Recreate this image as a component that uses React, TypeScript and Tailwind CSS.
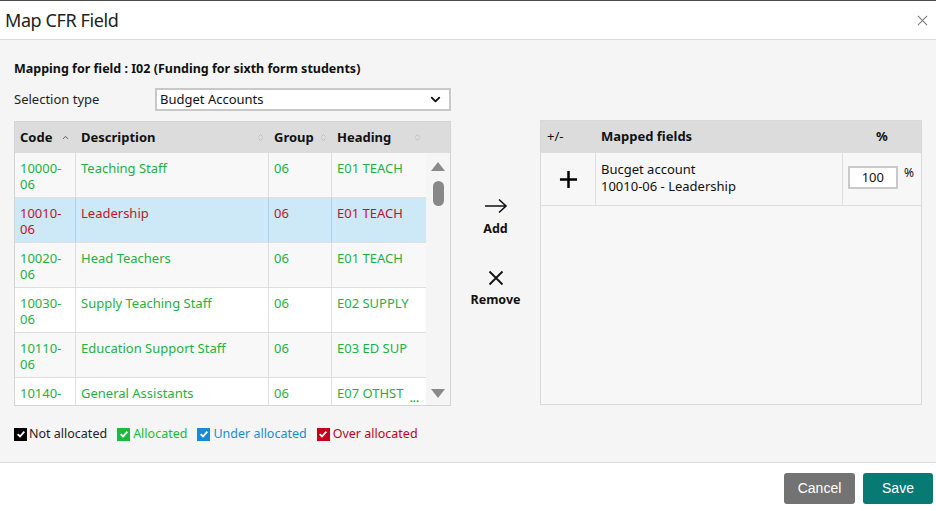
import { ChevronDown, ChevronUp, ChevronsUpDown } from "lucide-react";

type Row = {
  code: string;
  description: string;
  group: string;
  heading: string;
  selected?: boolean;
  shaded?: boolean;
  more?: boolean;
};

const rows: Row[] = [
  { code: "10000-06", description: "Teaching Staff", group: "06", heading: "E01 TEACH", shaded: true },
  { code: "10010-06", description: "Leadership", group: "06", heading: "E01 TEACH", selected: true },
  { code: "10020-06", description: "Head Teachers", group: "06", heading: "E01 TEACH", shaded: true },
  { code: "10030-06", description: "Supply Teaching Staff", group: "06", heading: "E02 SUPPLY" },
  { code: "10110-06", description: "Education Support Staff", group: "06", heading: "E03 ED SUP", shaded: true },
  { code: "10140-06", description: "General Assistants", group: "06", heading: "E07 OTHST", more: true },
];

function SortIcon() {
  return <ChevronsUpDown className="h-[9px] w-[9px] text-[#b5b5b5]" strokeWidth={2} />;
}

function Check({ color }: { color: string }) {
  return (
    <span className={`inline-flex h-[13px] w-[13px] items-center justify-center ${color}`}>
      <svg viewBox="0 0 12 12" className="h-[10px] w-[10px]">
        <path d="M2 6.2 L4.8 9 L10 3.2" fill="none" stroke="white" strokeWidth="2.2" />
      </svg>
    </span>
  );
}

function AccountsTable() {
  return (
    <div className="flex h-[285px] w-[437px] flex-col border border-[#d4d4d4] bg-white">
      <div className="grid h-[31px] shrink-0 grid-cols-[61px_193px_63px_95px_24px] items-center bg-[#dcdcdc] text-[13px] font-bold text-[#111]">
        <div className="flex items-center justify-between pl-[5px] pr-[6px]">
          <span>Code</span>
          <ChevronUp className="h-[9px] w-[9px] text-[#555]" strokeWidth={2.5} />
        </div>
        <div className="flex items-center justify-between pl-[5px] pr-[4px]">
          <span>Description</span>
          <SortIcon />
        </div>
        <div className="flex items-center justify-between pl-[5px] pr-[4px]">
          <span>Group</span>
          <SortIcon />
        </div>
        <div className="flex items-center justify-between pl-[5px] pr-[5px]">
          <span>Heading</span>
          <SortIcon />
        </div>
        <div />
      </div>
      <div className="flex min-h-0 flex-1">
        <div className="min-h-0 flex-1 overflow-hidden">
          {rows.map((row) => (
            <div
              key={row.code}
              className={`grid h-[45px] shrink-0 grid-cols-[61px_193px_63px_95px] border-b border-[#dedede] text-[13px] leading-[16px] ${
                row.selected ? "bg-[#cde8f7] text-[#c0142b]" : row.shaded ? "bg-[#f8f8f8] text-[#1fb042]" : "bg-white text-[#1fb042]"
              }`}
            >
              <div className={`border-r px-[5px] pt-[7px] ${row.selected ? "border-[#a9d5f0]" : "border-[#dedede]"}`}>
                {row.code.slice(0, 6)}
                <br />
                {row.code.slice(6)}
              </div>
              <div className={`border-r px-[5px] pt-[7px] ${row.selected ? "border-[#a9d5f0]" : "border-[#dedede]"}`}>
                {row.description}
              </div>
              <div className={`border-r px-[5px] pt-[7px] ${row.selected ? "border-[#a9d5f0]" : "border-[#dedede]"}`}>
                {row.group}
              </div>
              <div className="relative px-[5px] pt-[7px]">
                {row.heading}
                {row.more && <span className="absolute right-[8px] top-[12px] text-[11px] font-bold">...</span>}
              </div>
            </div>
          ))}
        </div>
        <div className="relative flex w-[24px] flex-col items-center bg-[#f5f5f5] pt-[9px]">
          <svg viewBox="0 0 14 9" className="h-[9px] w-[14px]">
            <path d="M7 0 L14 9 L0 9 Z" fill="#8a8a8a" />
          </svg>
          <div className="mt-[10px] h-[25px] w-[11px] rounded-full bg-[#888]" />
          <svg viewBox="0 0 14 9" className="absolute bottom-[7px] h-[9px] w-[14px]">
            <path d="M0 0 L14 0 L7 9 Z" fill="#8a8a8a" />
          </svg>
        </div>
      </div>
    </div>
  );
}

function MappedPanel() {
  return (
    <div className="flex h-[285px] w-[382px] flex-col border border-[#d8d8d8] bg-[#f7f7f7]">
      <div className="grid h-[32px] grid-cols-[55px_247px_78px] items-center bg-[#dcdcdc] text-[13px] font-bold text-[#111]">
        <div className="pl-[6px] font-normal">+/-</div>
        <div className="pl-[5px]">Mapped fields</div>
        <div className="pl-[33px]">%</div>
      </div>
      <div className="grid h-[53px] grid-cols-[55px_247px_78px] border-b border-[#dedede] text-[13px] leading-[17px] text-[#111]">
        <div className="flex items-center justify-center border-r border-[#dedede]">
          <svg viewBox="0 0 20 20" className="h-[19px] w-[19px]">
            <path d="M10 1 V19 M1 10 H19" stroke="#000" strokeWidth="2.6" />
          </svg>
        </div>
        <div className="border-r border-[#dedede] pl-[5px] pt-[8px]">
          Bucget account
          <br />
          10010-06 - Leadership
        </div>
        <div className="flex items-start pl-[5px] pt-[13px]">
          <div className="flex h-[23px] w-[50px] items-center justify-end border-2 border-[#c9c9c9] bg-white pr-[12px] text-[13px]">
            100
          </div>
          <span className="ml-[6px] mt-[-2px] text-[12px]">%</span>
        </div>
      </div>
    </div>
  );
}

export default function App() {
  return (
    <div className="flex h-[511px] w-[936px] flex-col border-t border-[#4a4a4a] bg-white font-['Noto_Sans',sans-serif] text-[#111]">
      <div className="flex h-[39px] shrink-0 items-center justify-between border-b border-[#dcdcdc] pl-[5px] pr-[8px]">
        <span className="text-[18px] tracking-[-0.4px] text-[#222]">Map CFR Field</span>
        <svg viewBox="0 0 12 12" className="h-[11px] w-[11px]">
          <path d="M1 1 L11 11 M11 1 L1 11" stroke="#777" strokeWidth="1.1" />
        </svg>
      </div>
      <div className="flex h-[423px] shrink-0 flex-col border-b border-[#dcdcdc] bg-[#f5f5f5] px-[14px] pt-[20px]">
        <div className="text-[12.5px] font-bold leading-[18px] text-[#111]">
          Mapping for field : I02 (Funding for sixth form students)
        </div>
        <div className="mt-[10px] flex items-center">
          <span className="w-[141px] text-[13px] text-[#222]">Selection type</span>
          <div className="flex h-[23px] w-[296px] items-center justify-between border-2 border-[#c8c8c8] bg-white pl-[3px] pr-[6px] text-[13px]">
            <span>Budget Accounts</span>
            <ChevronDown className="h-[15px] w-[15px] text-[#111]" strokeWidth={3} />
          </div>
        </div>
        <div className="mt-[10px] flex items-start">
          <AccountsTable />
          <div className="flex w-[89px] flex-col items-center pt-[77px] text-[12.5px] font-bold text-[#111]">
            <svg viewBox="0 0 24 16" className="h-[16px] w-[24px]">
              <path d="M1 8 H22 M15 1.5 L22 8 L15 14.5" fill="none" stroke="#111" strokeWidth="1.6" />
            </svg>
            <span className="mt-[6px]">Add</span>
            <svg viewBox="0 0 16 16" className="mt-[31px] h-[16px] w-[16px]">
              <path d="M1.5 1.5 L14.5 14.5 M14.5 1.5 L1.5 14.5" stroke="#111" strokeWidth="1.8" />
            </svg>
            <span className="mt-[5px]">Remove</span>
          </div>
          <div className="-mt-[1px]">
            <MappedPanel />
          </div>
        </div>
        <div className="mt-[19px] flex items-center text-[12.5px]">
          <Check color="bg-black" />
          <span className="ml-[2px] text-[#222]">Not allocated</span>
          <span className="ml-[10px]" />
          <Check color="bg-[#1db83c]" />
          <span className="ml-[3px] text-[#1db83c]">Allocated</span>
          <span className="ml-[10px]" />
          <Check color="bg-[#1a8ad4]" />
          <span className="ml-[3px] text-[#1a8ad4]">Under allocated</span>
          <span className="ml-[10px]" />
          <Check color="bg-[#c4001a]" />
          <span className="ml-[3px] text-[#c4001a]">Over allocated</span>
        </div>
      </div>
      <div className="flex flex-1 items-start justify-end gap-[8px] pr-[3px] pt-[10px] font-['Liberation_Sans',Arial,sans-serif] text-[14px] text-white">
        <button type="button" className="h-[31px] w-[71px] rounded-[3px] bg-[#737373]">
          Cancel
        </button>
        <button type="button" className="h-[31px] w-[70px] rounded-[3px] bg-[#087a74]">
          Save
        </button>
      </div>
    </div>
  );
}
